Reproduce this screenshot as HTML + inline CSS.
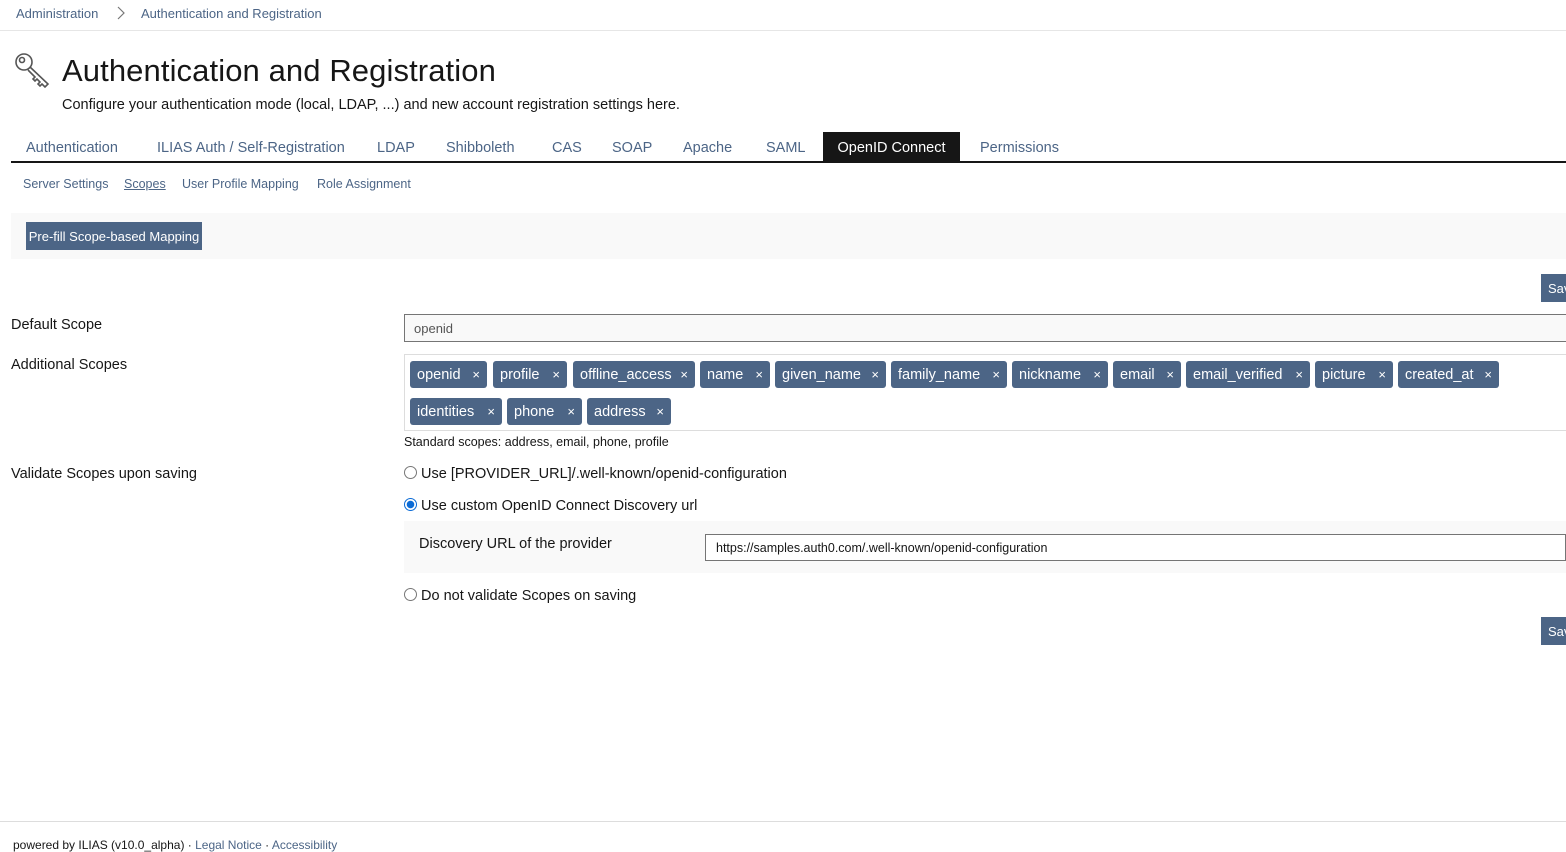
<!DOCTYPE html>
<html><head><meta charset="utf-8"><style>
*{box-sizing:border-box;margin:0;padding:0}
body{width:1566px;height:846px;overflow:hidden;background:#fff;font-family:"Liberation Sans",sans-serif;color:#161616;position:relative}
.a{position:absolute;white-space:nowrap}
.bc{font-size:13px;color:#4c6586;top:6px}
.tab{font-size:14.5px;color:#4c6586;top:140px}
.sub{font-size:12.5px;color:#4c6586;top:177px}
.lbl{font-size:14.5px;color:#161616}
.tag{position:absolute;height:27px;background:#4c6586;color:#fff;border-radius:3px;font-size:14.5px;line-height:29px;padding-left:7px}
.tag span{position:absolute;right:7px;font-size:13px;line-height:27px}
.btn{position:absolute;background:#4c6586;color:#fff;font-size:13px}
.radio{position:absolute;width:13px;height:13px;border:1px solid #777;border-radius:50%;background:#fff}
</style></head><body>
<div class="a bc" style="left:16px">Administration</div>
<svg class="a" style="left:117px;top:6px" width="8" height="14" viewBox="0 0 8 14"><path d="M1 1 L7 7 L1 13" fill="none" stroke="#777" stroke-width="1.2"/></svg>
<div class="a bc" style="left:141px">Authentication and Registration</div>
<div class="a" style="left:0;top:30px;width:1566px;height:1px;background:#e6e6e6"></div>
<svg class="a" style="left:14px;top:52px" width="38" height="38" viewBox="0 0 38 38" fill="none" stroke="#555" stroke-width="1.6"><circle cx="10" cy="10" r="8"/><circle cx="8" cy="8" r="2.5"/><path d="M16 15 L34 32 L31 35 L28 32 L26 34 L24 32 L26 30 L23 27 L21 29 L19 27 L21 25 L14 18"/></svg>
<div class="a" style="left:62px;top:53px;font-size:31px;letter-spacing:0.1px;color:#161616">Authentication and Registration</div>
<div class="a" style="left:62px;top:97px;font-size:14.5px">Configure your authentication mode (local, LDAP, ...) and new account registration settings here.</div>
<div class="a tab" style="left:26px">Authentication</div>
<div class="a tab" style="left:157px">ILIAS Auth / Self-Registration</div>
<div class="a tab" style="left:377px">LDAP</div>
<div class="a tab" style="left:446px">Shibboleth</div>
<div class="a tab" style="left:552px">CAS</div>
<div class="a tab" style="left:612px">SOAP</div>
<div class="a tab" style="left:683px">Apache</div>
<div class="a tab" style="left:766px">SAML</div>
<div class="a" style="left:823px;top:132px;width:137px;height:30px;background:#161616;color:#fff;font-size:14.5px;line-height:32px;text-align:center">OpenID Connect</div>
<div class="a tab" style="left:980px">Permissions</div>
<div class="a" style="left:11px;top:161px;width:1555px;height:2px;background:#161616"></div>
<div class="a sub" style="left:23px">Server Settings</div>
<div class="a sub" style="left:124px;text-decoration:underline">Scopes</div>
<div class="a sub" style="left:182px">User Profile Mapping</div>
<div class="a sub" style="left:317px">Role Assignment</div>
<div class="a" style="left:11px;top:213px;width:1555px;height:46px;background:#f9f9f9"></div>
<div class="btn" style="left:26px;top:222px;width:176px;height:28px;line-height:29px;text-align:center">Pre-fill Scope-based Mapping</div>
<div class="btn" style="left:1541px;top:274px;width:30px;height:28px;line-height:29px;padding-left:7px;overflow:hidden">Save</div>
<div class="a lbl" style="left:11px;top:317px">Default Scope</div>
<div class="a" style="left:404px;top:314px;width:1170px;height:28px;border:1px solid #757575;background:#f9f9f9;font-size:13px;line-height:27px;padding-left:9px;color:#555">openid</div>
<div class="a lbl" style="left:11px;top:357px">Additional Scopes</div>
<div class="a" style="left:404px;top:354px;width:1170px;height:77px;border:1px solid #ddd"></div>
<div class="tag" style="left:410px;top:361px;width:77px">openid<span>×</span></div>
<div class="tag" style="left:493px;top:361px;width:74px">profile<span>×</span></div>
<div class="tag" style="left:573px;top:361px;width:122px">offline_access<span>×</span></div>
<div class="tag" style="left:700px;top:361px;width:70px">name<span>×</span></div>
<div class="tag" style="left:775px;top:361px;width:111px">given_name<span>×</span></div>
<div class="tag" style="left:891px;top:361px;width:116px">family_name<span>×</span></div>
<div class="tag" style="left:1012px;top:361px;width:96px">nickname<span>×</span></div>
<div class="tag" style="left:1113px;top:361px;width:68px">email<span>×</span></div>
<div class="tag" style="left:1186px;top:361px;width:124px">email_verified<span>×</span></div>
<div class="tag" style="left:1315px;top:361px;width:78px">picture<span>×</span></div>
<div class="tag" style="left:1398px;top:361px;width:101px">created_at<span>×</span></div>
<div class="tag" style="left:410px;top:398px;width:92px">identities<span>×</span></div>
<div class="tag" style="left:507px;top:398px;width:75px">phone<span>×</span></div>
<div class="tag" style="left:587px;top:398px;width:84px">address<span>×</span></div>
<div class="a" style="left:404px;top:435px;font-size:12.5px">Standard scopes: address, email, phone, profile</div>
<div class="a lbl" style="left:11px;top:466px">Validate Scopes upon saving</div>
<div class="radio" style="left:404px;top:466px"></div>
<div class="a lbl" style="left:421px;top:466px">Use [PROVIDER_URL]/.well-known/openid-configuration</div>
<div class="radio" style="left:404px;top:498px;border:1px solid #0b6bd6;background:radial-gradient(circle,#0b6bd6 3.5px,#fff 4px)"></div>
<div class="a lbl" style="left:421px;top:498px">Use custom OpenID Connect Discovery url</div>
<div class="a" style="left:404px;top:521px;width:1162px;height:52px;background:#f9f9f9"></div>
<div class="a lbl" style="left:419px;top:536px">Discovery URL of the provider</div>
<div class="a" style="left:705px;top:534px;width:861px;height:27px;border:1px solid #757575;background:#fff;font-size:12.5px;line-height:26px;padding-left:10px">https://samples.auth0.com/.well-known/openid-configuration</div>
<div class="radio" style="left:404px;top:588px"></div>
<div class="a lbl" style="left:421px;top:588px">Do not validate Scopes on saving</div>
<div class="btn" style="left:1541px;top:617px;width:30px;height:28px;line-height:29px;padding-left:7px;overflow:hidden">Save</div>
<div class="a" style="left:0;top:821px;width:1566px;height:1px;background:#ddd"></div>
<div class="a" style="left:13px;top:838px;font-size:12px;color:#161616">powered by ILIAS (v10.0_alpha) · <span style="color:#4c6586">Legal Notice</span> · <span style="color:#4c6586">Accessibility</span></div>
</body></html>
